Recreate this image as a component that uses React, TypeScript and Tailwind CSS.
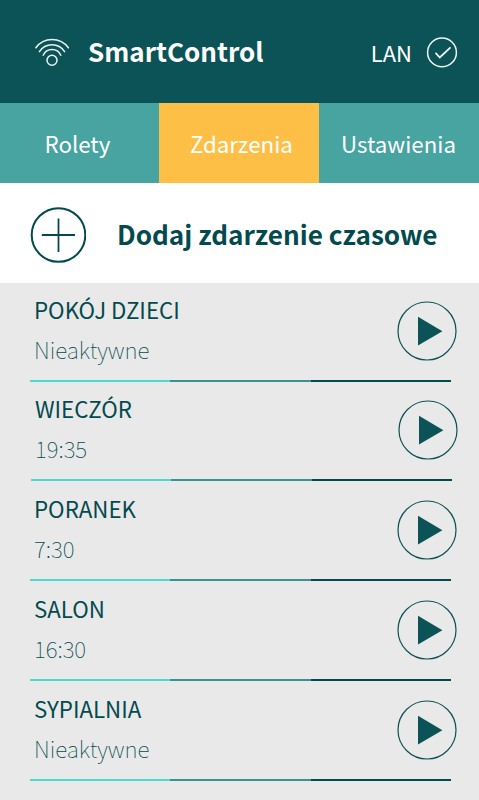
type Event = {
    name: string
    time: string
    rowClass: string
}

const events: Event[] = [
    { name: "POKÓJ DZIECI", time: "Nieaktywne", rowClass: "h-[99px] pt-[18px]" },
    { name: "WIECZÓR", time: "19:35", rowClass: "h-[99px] pt-[18px] translate-x-px" },
    { name: "PORANEK", time: "7:30", rowClass: "h-[100px] pt-[19px]" },
    { name: "SALON", time: "16:30", rowClass: "h-[100px] pt-[19px]" },
    { name: "SYPIALNIA", time: "Nieaktywne", rowClass: "h-[100px] pt-[19px]" },
]

function WifiIcon() {
    return (
        <svg className="w-9 h-8 shrink-0" viewBox="0 0 36 32" fill="none" stroke="#e8f3f1" strokeWidth="1.5" strokeLinecap="round">
            <path d="M1.9 11.8C9.8 .8 26.2 .8 34.4 11.8" />
            <path d="M5.4 15.7C11.3 6.5 24.7 6.5 30.6 15.7" />
            <path d="M9.2 19.3C12.6 11.6 23.4 11.6 26.8 19.3" />
            <circle cx="18" cy="24.2" r="5" />
        </svg>
    )
}

function Header() {
    return (
        <header className="h-[103px] bg-[#0c5357] text-white flex items-center pl-[34px] pr-[21px]">
            <WifiIcon />
            <h1 className="ml-[18px] -mt-px text-[26px] leading-[40px] font-bold">SmartControl</h1>
            <span className="ml-auto mt-px text-[22px] leading-[40px]">LAN</span>
            <svg className="ml-[14px] mt-px w-8 h-8 shrink-0" viewBox="0 0 32 32" fill="none" stroke="#eef6f5" strokeLinecap="round">
                <circle cx="16" cy="16.4" r="14.4" strokeWidth="1.5" />
                <path d="M10 17.3L13.8 21.5L24 11.8" strokeWidth="1.8" />
            </svg>
        </header>
    )
}

function Tabs() {
    return (
        <nav className="h-20 flex text-white text-[22.3px] leading-[40px] bg-[#47a4a1]">
            <a className="w-[159px] pl-[44.5px] pt-5">Rolety</a>
            <a className="w-[160px] pl-[31px] pt-5 bg-[#febf47]">Zdarzenia</a>
            <a className="flex-1 pl-[22px] pt-5">Ustawienia</a>
        </nav>
    )
}

function AddEvent() {
    return (
        <button className="w-full h-[100px] bg-white text-[#034a4e] flex items-center pl-[30px] text-left">
            <svg className="mt-[3px] w-14 h-14 shrink-0" viewBox="0 0 56 56" fill="none" stroke="currentColor" strokeWidth="2">
                <circle cx="28.5" cy="28" r="26.8" />
                <path d="M28.5 11.5V45M11.8 28H45" strokeWidth="1.8" />
            </svg>
            <span className="ml-[31px] mt-px text-[26.15px] leading-[40px] font-bold">Dodaj zdarzenie czasowe</span>
        </button>
    )
}

function EventRow({ event }: { event: Event }) {
    return (
        <li className={event.rowClass + " flex flex-col pl-[30px] pr-[22px]"}>
            <div className="flex-1 flex justify-between items-start">
                <div className="-mt-3 pl-1 text-[#034a4e] leading-[40px]">
                    <p className="text-[22.3px]">{event.name}</p>
                    <p className="text-[22.5px] font-thin">{event.time}</p>
                </div>
                <svg className="w-[60px] h-[60px]" viewBox="0 0 60 60">
                    <circle cx="30" cy="30" r="29" fill="none" stroke="#0c5357" strokeWidth="1.2" />
                    <path d="M21 15.8V44.6L45.4 30.2Z" fill="#0c5357" />
                </svg>
            </div>
            <div className="w-[421px] h-0.5 shrink-0 flex">
                <span className="flex-1 bg-[#4bdacf]" />
                <span className="flex-1 bg-[#38948f]" />
                <span className="flex-1 bg-[#034a4e]" />
            </div>
        </li>
    )
}

function App() {
    return (
        <div className="w-full h-[800px] overflow-hidden bg-[#e9e9e9] font-['Noto_Sans_CJK_SC',sans-serif]">
            <Header />
            <Tabs />
            <AddEvent />
            <ul>
                {events.map((event) => (
                    <EventRow key={event.name} event={event} />
                ))}
            </ul>
        </div>
    )
}

export default App
